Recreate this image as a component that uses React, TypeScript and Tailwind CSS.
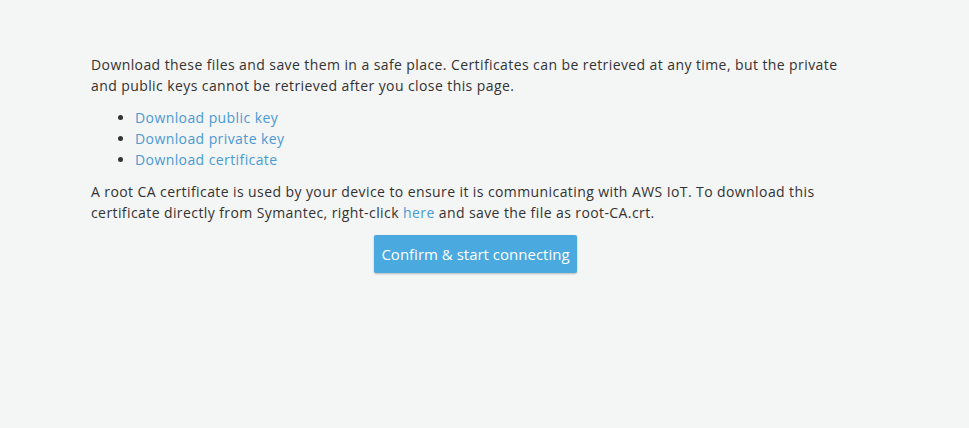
export default function App() {
  return (
    <div
      className="min-h-[428px] w-full bg-[#f4f5f5] text-[#333333]"
      style={{ fontFamily: '"Open Sans", "Liberation Sans", sans-serif' }}
    >
      <div className="ml-[91px] w-[769px] pt-[54px] text-[14px] leading-[21px] tracking-[0.41px]">
        <p className="w-[760px]">
          Download these files and save them in a safe place. Certificates can be retrieved at any time, but the
          private and public keys cannot be retrieved after you close this page.
        </p>
        <ul className="mt-[11px] list-disc pl-[44px] marker:text-[#333333]">
          <li>
            <a className="text-[#4a9ad4]">Download public key</a>
          </li>
          <li>
            <a className="text-[#4a9ad4]">Download private key</a>
          </li>
          <li>
            <a className="text-[#4a9ad4]">Download certificate</a>
          </li>
        </ul>
        <p className="mt-[11px] w-[760px]">
          A root CA certificate is used by your device to ensure it is communicating with AWS IoT. To download this
          certificate directly from Symantec, right-click <a className="text-[#4a9ad4]">here</a> and save the file as
          root-CA.crt.
        </p>
        <div className="mt-[12px] flex justify-center">
          <button className="h-[38px] w-[203px] rounded-[2px] bg-[#4aa9de] text-[15px] tracking-normal text-white shadow-[0_1px_2px_rgba(0,0,0,0.25)]">
            Confirm &amp; start connecting
          </button>
        </div>
      </div>
    </div>
  );
}
